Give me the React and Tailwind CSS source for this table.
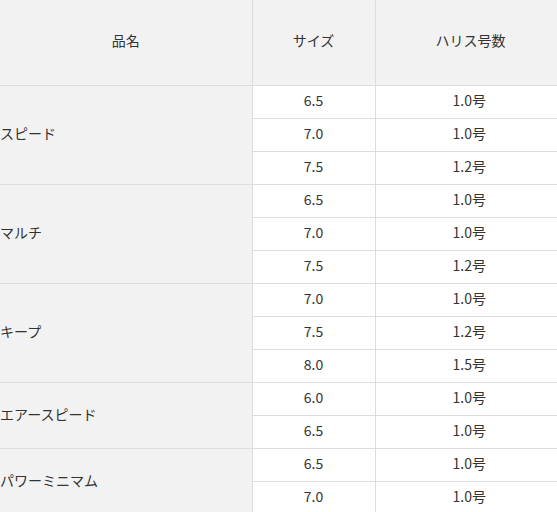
import React from "react";

const groups = [
  { name: "スピード", rows: [["6.5", "1.0号"], ["7.0", "1.0号"], ["7.5", "1.2号"]] },
  { name: "マルチ", rows: [["6.5", "1.0号"], ["7.0", "1.0号"], ["7.5", "1.2号"]] },
  { name: "キープ", rows: [["7.0", "1.0号"], ["7.5", "1.2号"], ["8.0", "1.5号"]] },
  { name: "エアースピード", rows: [["6.0", "1.0号"], ["6.5", "1.0号"]] },
  { name: "パワーミニマム", rows: [["6.5", "1.0号"], ["7.0", "1.0号"]] },
];

const App = () => {
  return (
    <div
      className="w-[557px] h-[512px] overflow-hidden bg-white text-[#333] text-[14px]"
      style={{ fontFamily: '"Noto Sans CJK JP", "Noto Sans", sans-serif' }}
    >
      <table className="table-fixed border-collapse w-[600px]">
        <colgroup>
          <col className="w-[252px]" />
          <col className="w-[123px]" />
          <col className="w-[225px]" />
        </colgroup>
        <thead>
          <tr className="h-[85px] bg-[#f2f2f2]">
            <th className="font-normal border-b border-r border-[#dddddd] text-center pb-[4px]">品名</th>
            <th className="font-normal border-b border-r border-[#dddddd] text-center pb-[4px]">サイズ</th>
            <th className="font-normal border-b border-r border-[#dddddd] text-left pl-[60px] pb-[4px]">ハリス号数</th>
          </tr>
        </thead>
        <tbody>
          {groups.map((g) =>
            g.rows.map((r, i) => (
              <tr key={g.name + i} className="h-[33px]">
                {i === 0 && (
                  <td
                    rowSpan={g.rows.length}
                    className="bg-[#f2f2f2] border-b border-r border-[#dddddd] pl-0 pb-[2px] align-middle"
                  >
                    {g.name}
                  </td>
                )}
                <td className="border-b border-r border-[#dddddd] text-center p-0 pb-[3px]">{r[0]}</td>
                <td className="border-b border-r border-[#dddddd] text-left p-0 pl-[77px] pb-[3px]">{r[1]}</td>
              </tr>
            ))
          )}
        </tbody>
      </table>
    </div>
  );
};

export default App;
